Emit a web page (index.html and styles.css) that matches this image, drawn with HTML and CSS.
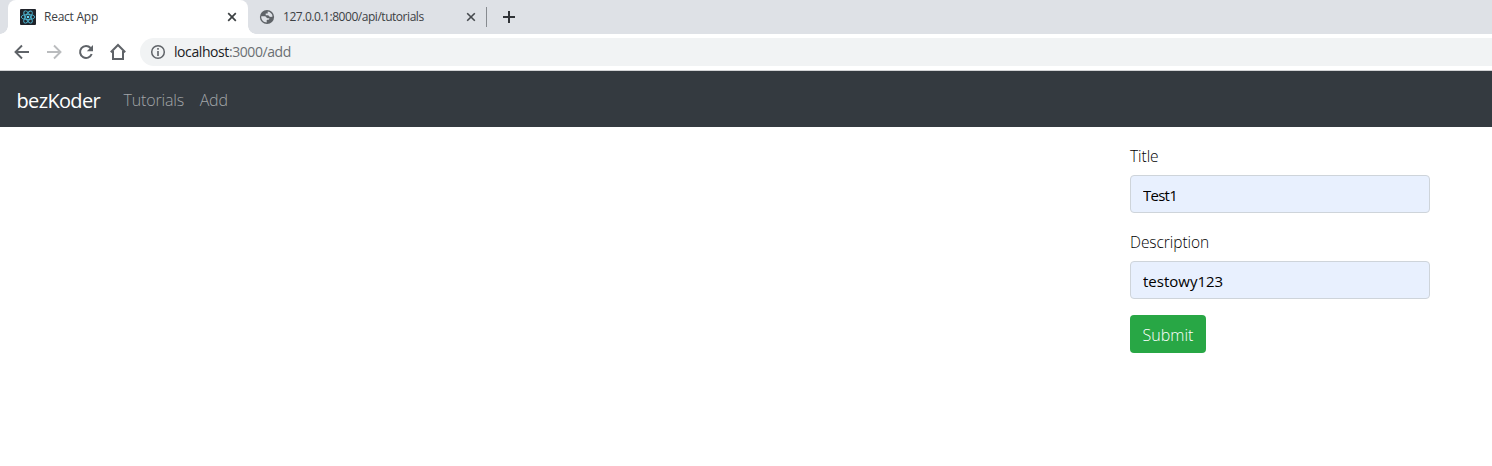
FILE: index.html
```html
<!DOCTYPE html>
<html lang="en">
<head>
<meta charset="utf-8">
<title>React App</title>
<link rel="stylesheet" href="styles.css">
</head>
<body>
<div class="tabstrip">
  <div class="tab tab-active">
    <svg class="favicon" width="16" height="16" viewBox="0 0 16 16"><rect width="16" height="16" rx="1" fill="#20232a"/><g fill="none" stroke="#4db5d1" stroke-width=".9"><ellipse cx="8" cy="8" rx="6.8" ry="2.6"/><ellipse cx="8" cy="8" rx="6.8" ry="2.6" transform="rotate(60 8 8)"/><ellipse cx="8" cy="8" rx="6.8" ry="2.6" transform="rotate(120 8 8)"/></g><circle cx="8" cy="8" r="1.3" fill="#61dafb"/></svg>
    <span class="tab-title title-app">React App</span>
    <svg class="close" width="10" height="10" viewBox="0 0 10 10"><path d="M1.2 1.2l7.6 7.6M8.8 1.2L1.2 8.8" stroke="#3c4043" stroke-width="1.7"/></svg>
  </div>
  <div class="tab tab-idle">
    <svg class="favicon" width="16" height="16" viewBox="0 0 16 16"><circle cx="8" cy="8" r="7.100" fill="#5f6368"/><path d="M2.200 7.200h3.600c1.500 0 1.500 2 3 2h1.600c0 1.900-1.500 1.500-2.700 1.700v2.600C4.600 13.300 2 10.800 2.200 7.200zM8.700 2.600c2.700.3 4.600 2.400 4.900 4.900-1.600 1-3.600.4-4.200-1.200H6.700V4.600h2z" fill="#dee1e6"/></svg>
    <span class="tab-title title-api">127.0.0.1:8000/api/tutorials</span>
    <svg class="close" width="10" height="10" viewBox="0 0 10 10"><path d="M1.200 1.200l7.600 7.600M8.800 1.200L1.200 8.800" stroke="#45494d" stroke-width="1.600"/></svg>
  </div>
  <div class="separator"></div>
  <svg class="new-tab" width="12" height="12" viewBox="0 0 12 12"><path d="M6 0v12M0 6h12" stroke="#303337" stroke-width="2"/></svg>
</div>
<div class="toolbar">
  <svg width="16" height="16" viewBox="0 0 16 16"><path d="M15 8H2M8 1.500L1.500 8 8 14.500" fill="none" stroke="#5f6368" stroke-width="1.900"/></svg>
  <svg width="16" height="16" viewBox="0 0 16 16"><path d="M1 8h13M8 1.500L14.500 8 8 14.500" fill="none" stroke="#babcbe" stroke-width="1.900"/></svg>
  <svg width="16" height="16" viewBox="0 0 16 16"><path d="M12.600 4A6 6 0 1 0 13.700 10" fill="none" stroke="#5f6368" stroke-width="2"/><path d="M15 1v6.200H8.800z" fill="#5f6368"/></svg>
  <svg width="18" height="18" viewBox="0 0 18 18"><path d="M1.800 9.200L9 2l7.200 7.200M4 8v8h10V8" fill="none" stroke="#5f6368" stroke-width="2"/></svg>
  <div class="address">
    <svg width="16" height="16" viewBox="0 0 16 16"><circle cx="8" cy="8" r="6.300" fill="none" stroke="#5f6368" stroke-width="1.500"/><path d="M8 4v1.700M8 7v5" stroke="#5f6368" stroke-width="1.600"/></svg>
    <span class="url"><span class="host">localhost</span>:3000/add</span>
  </div>
</div>
<nav class="navbar">
  <a class="brand">bezKoder</a>
  <a class="nav-link link-tutorials">Tutorials</a>
  <a class="nav-link link-add">Add</a>
</nav>
<main class="content">
  <form class="form">
    <label class="label-title" for="title">Title</label>
    <input class="input-title" id="title" value="Test1">
    <label class="label-description" for="description">Description</label>
    <input class="input-description" id="description" value="testowy123">
    <button class="submit" type="button">Submit</button>
  </form>
</main>
</body>
</html>
```
FILE: styles.css
```css
* { box-sizing: border-box; }
body { margin: 0; height: 466px; overflow: hidden; background: #fff; font-family: "Open Sans", "Noto Sans", sans-serif; color: #212529; }
svg { display: block; flex: none; }
.tabstrip { display: flex; align-items: center; height: 34px; padding-left: 8px; background: #dee1e6; }
.tab { display: flex; align-items: center; height: 34px; flex: none; }
.tab-active { position: relative; width: 240px; padding: 0 11px 0 12px; background: #fff; border-radius: 8px 8px 0 0; }
.tab-active::before, .tab-active::after { content: ""; position: absolute; bottom: 0; width: 8px; height: 8px; }
.tab-active::before { left: -8px; background: radial-gradient(circle at 0 0, transparent 7.5px, #fff 8px); }
.tab-active::after { right: -8px; background: radial-gradient(circle at 100% 0, transparent 7.5px, #fff 8px); }
.tab-idle { width: 238px; padding: 0 10px 0 11px; }
.tab-title { margin-left: 8px; font-size: 12px; line-height: 16px; color: #3c4043; white-space: nowrap; }
.title-app { letter-spacing: -.25px; }
.title-api { letter-spacing: -.46px; }
.close { margin-left: auto; }
.separator { width: 1px; height: 20px; background: #878b90; }
.new-tab { margin-left: 16px; }
.toolbar { display: flex; align-items: center; gap: 16px; height: 37px; padding: 0 0 1px 14px; border-bottom: 1px solid #d2d3d5; }
.toolbar > svg:nth-child(4) { margin-left: -1px; }
.address { display: flex; align-items: center; gap: 8px; flex: 1; height: 28px; margin-left: -3px; padding-left: 10px; border-radius: 14px 0 0 14px; background: #f1f3f4; }
.url { font-size: 14px; line-height: 20px; color: #6b6f73; letter-spacing: -.42px; }
.host { color: #202124; }
.navbar { display: flex; align-items: center; height: 56px; padding: 0 16.500px; background: #343a40; }
.brand { width: 84px; margin-right: 23px; font-size: 20px; line-height: 30px; color: #fff; letter-spacing: -.65px; padding-top: 3px; }
.nav-link { font-size: 16px; font-weight: 300; line-height: 24px; color: #a2a5a8; padding-top: 1px; letter-spacing: -.15px; }
.link-tutorials { margin-right: 15.500px; }
.content { display: flex; justify-content: flex-end; padding: 17px 62px 0 0; }
.form { display: flex; flex-direction: column; width: 300px; }
.form label { height: 24px; margin-bottom: 7px; font-size: 15.500px; font-weight: 300; line-height: 24px; color: #000; letter-spacing: -.05px; }
.form input { width: 300px; height: 38px; margin: 0 0 17px; padding: 1px 12px 0; border: 1px solid #ced4da; border-radius: 4px; background: #e8f0fe; color: #000; font-family: inherit; font-size: 15px; outline: 0; }
.form .input-title { letter-spacing: -.75px; }
.form .input-description { margin-bottom: 16px; letter-spacing: 0; }
.submit { width: 76px; height: 38px; padding: 1px 0 0; border: 0; border-radius: 4px; background: #28a745; color: #fff; font-family: inherit; font-size: 16px; font-weight: 300; }
```
